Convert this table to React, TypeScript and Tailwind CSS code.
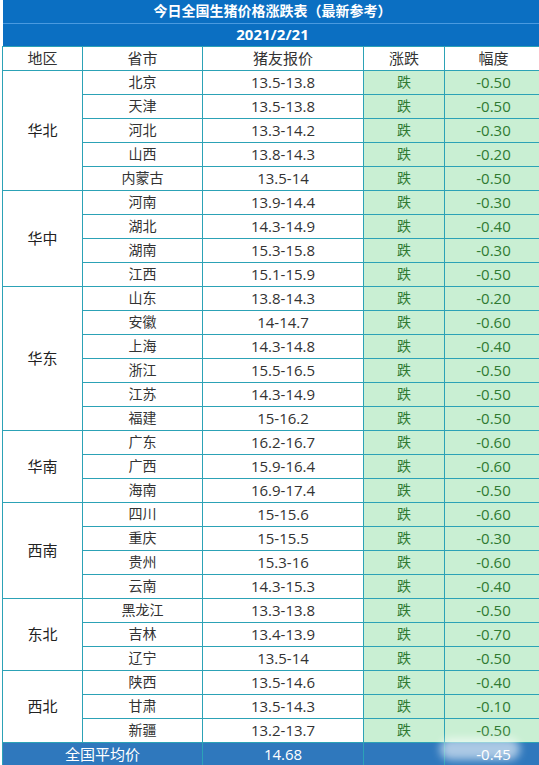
const data: { region: string; rows: [string, string, string][] }[] = [
  {
    region: '华北',
    rows: [
      ['北京', '13.5-13.8', '-0.50'],
      ['天津', '13.5-13.8', '-0.50'],
      ['河北', '13.3-14.2', '-0.30'],
      ['山西', '13.8-14.3', '-0.20'],
      ['内蒙古', '13.5-14', '-0.50'],
    ],
  },
  {
    region: '华中',
    rows: [
      ['河南', '13.9-14.4', '-0.30'],
      ['湖北', '14.3-14.9', '-0.40'],
      ['湖南', '15.3-15.8', '-0.30'],
      ['江西', '15.1-15.9', '-0.50'],
    ],
  },
  {
    region: '华东',
    rows: [
      ['山东', '13.8-14.3', '-0.20'],
      ['安徽', '14-14.7', '-0.60'],
      ['上海', '14.3-14.8', '-0.40'],
      ['浙江', '15.5-16.5', '-0.50'],
      ['江苏', '14.3-14.9', '-0.50'],
      ['福建', '15-16.2', '-0.50'],
    ],
  },
  {
    region: '华南',
    rows: [
      ['广东', '16.2-16.7', '-0.60'],
      ['广西', '15.9-16.4', '-0.60'],
      ['海南', '16.9-17.4', '-0.50'],
    ],
  },
  {
    region: '西南',
    rows: [
      ['四川', '15-15.6', '-0.60'],
      ['重庆', '15-15.5', '-0.30'],
      ['贵州', '15.3-16', '-0.60'],
      ['云南', '14.3-15.3', '-0.40'],
    ],
  },
  {
    region: '东北',
    rows: [
      ['黑龙江', '13.3-13.8', '-0.50'],
      ['吉林', '13.4-13.9', '-0.70'],
      ['辽宁', '13.5-14', '-0.50'],
    ],
  },
  {
    region: '西北',
    rows: [
      ['陕西', '13.5-14.6', '-0.40'],
      ['甘肃', '13.5-14.3', '-0.10'],
      ['新疆', '13.2-13.7', '-0.50'],
    ],
  },
]

const cell = 'border border-[#2ca2b6] h-[24px] p-0 text-center align-middle'

export default function App() {
  return (
    <div
      className="relative w-[539px] h-[765px] overflow-hidden bg-white text-[14px] leading-none text-[#333]"
      style={{ fontFamily: '"Open Sans", "Noto Sans CJK SC", sans-serif' }}
    >
      <table className="table-fixed border-collapse w-[540px] ml-[2px]">
        <colgroup>
          <col className="w-[80px]" />
          <col className="w-[120px]" />
          <col className="w-[161px]" />
          <col className="w-[81px]" />
          <col className="w-[98px]" />
        </colgroup>
        <thead>
          <tr>
            <th colSpan={5} className="h-[23px] bg-[#0b6fc2] border-b border-[#4a9ae0] text-white font-bold text-[14px] text-center">
              今日全国生猪价格涨跌表（最新参考）
            </th>
          </tr>
          <tr>
            <th colSpan={5} className="h-[23px] bg-[#0b6fc2] text-white font-bold text-[15px] text-center">
              2021/2/21
            </th>
          </tr>
          <tr>
            {['地区', '省市', '猪友报价', '涨跌', '幅度'].map((h) => (
              <th key={h} className={`${cell} font-normal text-[15px] text-[#333]`}>
                {h}
              </th>
            ))}
          </tr>
        </thead>
        <tbody>
          {data.map((g) =>
            g.rows.map((r, i) => (
              <tr key={g.region + r[0]}>
                {i === 0 && (
                  <td rowSpan={g.rows.length} className={`${cell} text-[15px] text-[#222]`}>
                    {g.region}
                  </td>
                )}
                <td className={cell}>{r[0]}</td>
                <td className={`${cell} text-[15px]`}>{r[1]}</td>
                <td className={`${cell} bg-[#c9efd3] text-[#2f7a32]`}>跌</td>
                <td className={`${cell} bg-[#c9efd3] text-[#2f7a32] text-[15px]`}>{r[2]}</td>
              </tr>
            )),
          )}
          <tr>
            <td colSpan={2} className={`${cell} h-[23px] bg-[#2f78bd] text-white text-[15px]`}>
              全国平均价
            </td>
            <td className={`${cell} h-[23px] bg-[#2f78bd] text-white text-[15px]`}>14.68</td>
            <td className={`${cell} h-[23px] bg-[#2f78bd]`}></td>
            <td className={`${cell} h-[23px] bg-[#2f78bd] text-white text-[15px]`}>-0.45</td>
          </tr>
        </tbody>
      </table>
      {/* watermark */}
      <div className="absolute left-[440px] top-[738px] w-[80px] h-[22px] rounded-full bg-white/60 blur-[4px]" />
    </div>
  )
}
